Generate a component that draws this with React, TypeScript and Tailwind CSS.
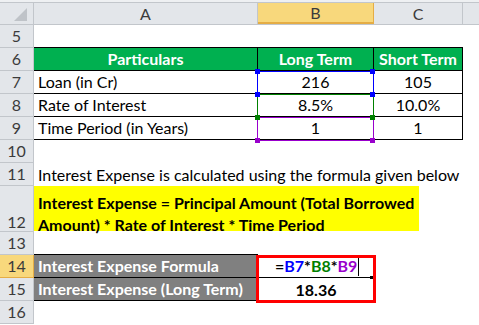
import type { ReactNode } from "react";

const hdr = "bg-[#e3e6ea] border-[#c2c6cb]";
const hdrOn = "bg-[#f8d87c] border-[#e5ad45]";

function RowHead({ n, on = false, bottom = false }: { n: number; on?: boolean; bottom?: boolean }) {
  return (
    <div
      className={`w-[34px] shrink-0 border-r border-b flex justify-center text-[16px] text-[#3b3b3b] ${
        on ? hdrOn : hdr
      } ${bottom ? "items-end pb-[1px]" : "items-center"}`}
    >
      {n}
    </div>
  );
}

function Row({ n, h = "h-[23px]", on = false, bottom = false, children }: { n: number; h?: string; on?: boolean; bottom?: boolean; children?: ReactNode }) {
  return (
    <div className={`flex ${h}`}>
      <RowHead n={n} on={on} bottom={bottom} />
      <div className="flex flex-1 min-w-0">{children}</div>
    </div>
  );
}

// table cell with black grid lines (rows 6-9)
function T({ w, className = "", children }: { w: string; className?: string; children?: ReactNode }) {
  return (
    <div className={`${w} shrink-0 h-full border-r border-b border-black flex items-center ${className}`}>
      {children}
    </div>
  );
}

export default function App() {
  const A = "w-[224px]";
  const B = "w-[116px]";
  const C = "w-[89px]";

  return (
    <div className="relative w-[479px] h-[325px] overflow-hidden bg-white font-['Lato','Noto_Sans',sans-serif] text-[16px] text-black leading-none">
      {/* column headers */}
      <div className="h-[2px] bg-[#eef0f2]" />
      <div className="flex h-[23px] border-t border-b border-[#c2c6cb]">
        <div className={`w-[34px] shrink-0 border-r flex items-end justify-end ${hdr}`}>
          <svg width="14" height="14" viewBox="0 0 14 14" className="mr-[5px] mb-[2px]">
            <polygon points="13,0 13,13 0,13" fill="#bfc3c8" />
          </svg>
        </div>
        <div className={`${A} shrink-0 border-r flex items-center justify-center text-[#3b3b3b] ${hdr}`}>A</div>
        <div className={`${B} shrink-0 border-r border-b-2 flex items-center justify-center text-[#3b3b3b] ${hdrOn}`}>B</div>
        <div className={`${C} shrink-0 border-r flex items-center justify-center text-[#3b3b3b] ${hdr}`}>C</div>
        <div className={`flex-1 ${hdr}`} />
      </div>

      <Row n={5}>
        <div className={`${A} shrink-0 border-b border-black`} />
        <div className={`${B} shrink-0 border-b border-black`} />
        <div className={`${C} shrink-0 border-b border-black`} />
      </Row>
      <Row n={6}>
        <T w={A} className="bg-[#00b050] justify-center font-bold text-white">Particulars</T>
        <T w={B} className="bg-[#00b050] justify-center font-bold text-white">Long Term</T>
        <T w={C} className="bg-[#00b050] justify-center font-bold text-white">Short Term</T>
      </Row>
      <Row n={7}>
        <T w={A} className="pl-[4px]">Loan (in Cr)</T>
        <T w={B} className="justify-center">216</T>
        <T w={C} className="justify-center">105</T>
      </Row>
      <Row n={8}>
        <T w={A} className="pl-[4px]">Rate of Interest</T>
        <T w={B} className="justify-center">8.5%</T>
        <T w={C} className="justify-center">10.0%</T>
      </Row>
      <Row n={9}>
        <T w={A} className="pl-[4px]">Time Period (in Years)</T>
        <T w={B} className="justify-center">1</T>
        <T w={C} className="justify-center">1</T>
      </Row>
      <Row n={10} />
      <Row n={11}>
        <div className="pl-[4px] flex items-center whitespace-nowrap">
          Interest Expense is calculated using the formula given below
        </div>
      </Row>
      <Row n={12} h="h-[46px]" bottom>
        <div className="w-[385px] shrink-0 h-[45px] bg-[#ffff00] pl-[4px] pt-[6px] font-bold leading-[22px] whitespace-nowrap">
          Interest Expense = Principal Amount (Total Borrowed
          <br />
          Amount) * Rate of Interest * Time Period
        </div>
      </Row>
      <Row n={13}>
        <div className={`${A} shrink-0 border-b border-black`} />
      </Row>
      <Row n={14} on>
        <div className={`${A} shrink-0 h-full bg-[#808080] border-b border-black flex items-center pl-[4px] font-bold text-white`}>
          Interest Expense Formula
        </div>
        <div className={`${B} shrink-0 h-full border-b border-black relative flex items-center pl-[17px] font-bold`}>
          <span>=</span>
          <span className="text-[#0000ff]">B7</span>
          <span>*</span>
          <span className="text-[#008000]">B8</span>
          <span>*</span>
          <span className="text-[#9900cc]">B9</span>
          <span className="ml-[1px] w-px h-[19px] bg-black" />
          <span className="absolute right-[1px] bottom-[-2px] w-[3px] h-[3px] bg-black" />
        </div>
      </Row>
      <Row n={15}>
        <div className={`${A} shrink-0 h-full bg-[#808080] border-b border-black flex items-center pl-[4px] font-bold text-white`}>
          Interest Expense (Long Term)
        </div>
        <div className={`${B} shrink-0 h-full flex items-center justify-center font-bold`}>18.36</div>
      </Row>
      <Row n={16} />

      {/* range highlights from formula edit */}
      <div className="absolute left-[257px] top-[71px] w-[117px] h-[24px] border border-[#0000ff]" />
      <div className="absolute left-[257px] top-[94px] w-[117px] h-[24px] border border-[#008000]" />
      <div className="absolute left-[257px] top-[117px] w-[117px] h-[24px] border border-[#9900cc]" />
      {[
        ["left-[255px] top-[69px]", "bg-[#0000ff]"],
        ["left-[370px] top-[69px]", "bg-[#0000ff]"],
        ["left-[255px] top-[92px]", "bg-[#0000ff]"],
        ["left-[370px] top-[92px]", "bg-[#0000ff]"],
        ["left-[255px] top-[115px]", "bg-[#008000]"],
        ["left-[370px] top-[115px]", "bg-[#008000]"],
        ["left-[255px] top-[138px]", "bg-[#9900cc]"],
        ["left-[370px] top-[138px]", "bg-[#9900cc]"],
      ].map(([pos, bg], i) => (
        <div key={i} className={`absolute w-[5px] h-[5px] ${pos} ${bg}`} />
      ))}

      {/* red callout box */}
      <div className="absolute left-[256px] top-[255px] w-[120px] h-[48px] border-[3px] border-[#ff0000]" />
    </div>
  );
}
